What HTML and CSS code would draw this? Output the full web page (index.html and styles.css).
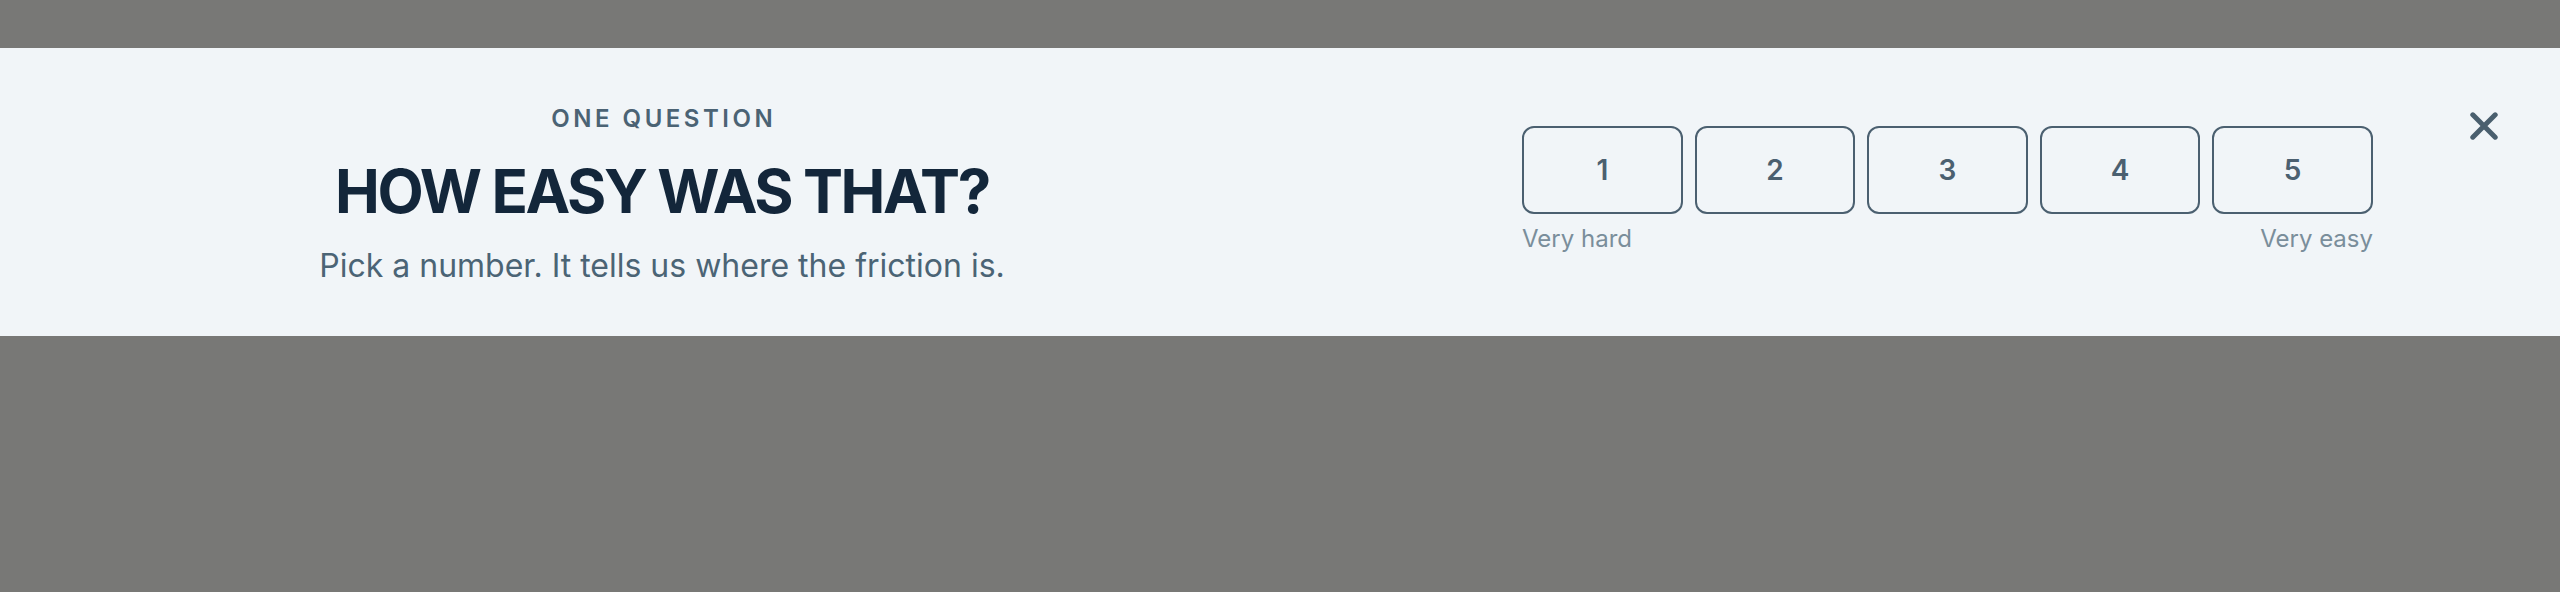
FILE: index.html
```html
<!DOCTYPE html>
<html lang="en">
<head>
<meta charset="utf-8">
<title>One question</title>
<link rel="stylesheet" href="styles.css">
</head>
<body>
<div class="page">
  <section class="banner">
    <div class="intro">
      <p class="eyebrow">ONE QUESTION</p>
      <h1 class="title">HOW EASY WAS THAT?</h1>
      <p class="subtitle">Pick a number. It tells us where the friction is.</p>
    </div>
    <div class="rating">
      <div class="scale">
        <button class="score">1</button>
        <button class="score">2</button>
        <button class="score">3</button>
        <button class="score">4</button>
        <button class="score">5</button>
      </div>
      <div class="legend">
        <span>Very hard</span>
        <span>Very easy</span>
      </div>
    </div>
    <button class="close" aria-label="Close">
      <svg width="28" height="28" viewBox="0 0 28 28" aria-hidden="true">
        <path d="M2.8 2.8 L25.2 25.2 M25.2 2.8 L2.8 25.2" stroke="#4a5f6e" stroke-width="5" stroke-linecap="round" fill="none"/>
      </svg>
    </button>
  </section>
</div>
</body>
</html>
```

FILE: styles.css
```css
html, body {
  margin: 0;
  padding: 0;
}
body {
  background: #787876;
  font-family: Inter, "Noto Sans", "Liberation Sans", sans-serif;
  width: 2560px;
  height: 592px;
  overflow: hidden;
}
.page {
  padding-top: 48px;
}
.banner {
  background: #f1f5f8;
  height: 288px;
  display: flex;
  align-items: flex-start;
  box-sizing: border-box;
}
.intro {
  flex: 0 0 1324px;
  display: flex;
  flex-direction: column;
  align-items: center;
  text-align: center;
  padding-top: 57px;
}
.eyebrow {
  margin: 0;
  font-size: 24px;
  line-height: 28.8px;
  font-weight: 600;
  letter-spacing: 3.5px;
  margin-right: -3.5px;
  color: #4b6374;
}
.title {
  margin: 24px 0 0;
  font-size: 60px;
  line-height: 66px;
  font-weight: 700;
  letter-spacing: -0.04em;
  color: #13263a;
}
.subtitle {
  margin: 21px 0 0;
  font-size: 32px;
  line-height: 42px;
  font-weight: 400;
  color: #4b6475;
}
.rating {
  flex: 0 0 851px;
  margin-left: 198px;
  padding-top: 78px;
  display: flex;
  flex-direction: column;
  gap: 11px;
}
.scale {
  display: flex;
  gap: 12px;
}
.score {
  flex: 1 1 0;
  height: 88px;
  border: 2px solid #4b6070;
  border-radius: 12px;
  background: transparent;
  font-family: inherit;
  font-size: 28px;
  font-weight: 600;
  color: #4b6070;
  padding: 0;
}
.legend {
  display: flex;
  justify-content: space-between;
  font-size: 24px;
  line-height: 28px;
  color: #7a8e9b;
}
.close {
  margin: 54px 0 0 87px;
  width: 48px;
  height: 48px;
  border: 0;
  padding: 0;
  background: transparent;
  display: flex;
  align-items: center;
  justify-content: center;
}
```
